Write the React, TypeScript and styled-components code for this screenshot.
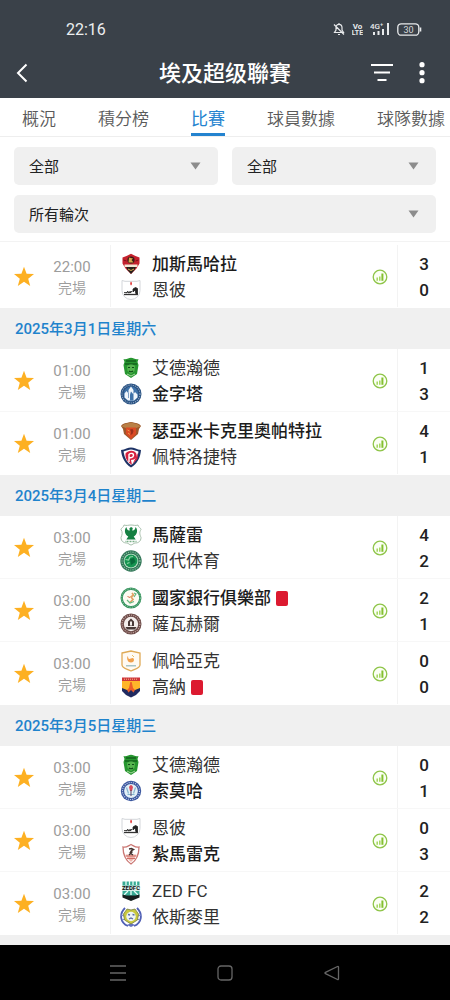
import React from 'react';
import styled, { createGlobalStyle } from 'styled-components';

const GlobalStyle = createGlobalStyle`
  *, *::before, *::after { box-sizing: border-box; }
  body {
    margin: 0;
    background: #fff;
    color: #222;
    font-family: Roboto, "Noto Sans CJK SC", sans-serif;
  }
  button, select { font: inherit; color: inherit; }
  button { border: 0; padding: 0; background: none; cursor: pointer; }
  svg { display: block; }
  h1, h2, ul { margin: 0; padding: 0; font: inherit; list-style: none; }
`;

const Screen = styled.div`
  display: flex;
  flex-direction: column;
  min-height: 100vh;
`;

const Header = styled.header`
  background: #3a4149;
  color: #fff;
`;

const StatusBar = styled.div`
  display: flex;
  align-items: center;
  justify-content: space-between;
  height: 48px;
  padding: 10px 28px 0 66px;
  font-size: 16px;
  color: #eceef0;
`;

const StatusIcons = styled.div`
  display: flex;
  align-items: center;
  gap: 7px;
`;

const TitleBar = styled.div`
  display: grid;
  grid-template-columns: 80px 1fr 80px;
  align-items: center;
  height: 50px;
`;

const Title = styled.h1`
  padding-top: 2px;
  font-size: 22px;
  font-weight: 500;
  line-height: 30px;
  text-align: center;
`;

const BackButton = styled.button`
  justify-self: start;
  padding: 4px 16px;
`;

const HeaderActions = styled.div`
  display: flex;
  align-items: center;
  justify-content: flex-end;
  gap: 26px;
  padding-right: 25px;
`;

const Tabs = styled.nav`
  display: flex;
  gap: 42px;
  height: 39px;
  padding: 0 5px 0 22px;
  overflow-x: auto;
  overflow-y: hidden;
  scrollbar-width: none;
  border-bottom: 1px solid #eee;
`;

const Tab = styled.a<{ $active?: boolean }>`
  flex: none;
  height: 38px;
  font-size: 17px;
  font-weight: ${(p) => (p.$active ? 400 : 350)};
  line-height: 42px;
  text-decoration: none;
  white-space: nowrap;
  color: ${(p) => (p.$active ? '#2483cf' : '#5a5a5a')};
  border-bottom: ${(p) => (p.$active ? '3px solid #2483cf' : '0')};
`;

const Filters = styled.form`
  display: grid;
  grid-template-columns: 1fr 1fr;
  gap: 10px 14px;
  padding: 10px 14px 8px;
  border-bottom: 1px solid #f3f3f3;
`;

const Field = styled.label<{ $wide?: boolean }>`
  display: grid;
  align-items: center;
  grid-column: ${(p) => (p.$wide ? '1 / -1' : 'auto')};
  border-radius: 5px;
  background: #f0f0f0;

  & > * { grid-area: 1 / 1; }
  & > svg {
    justify-self: end;
    margin-right: 17px;
    pointer-events: none;
  }
`;

const Select = styled.select`
  appearance: none;
  width: 100%;
  height: 38px;
  padding: 2px 36px 0 15px;
  border: 0;
  background: transparent;
  font-size: 15px;
  color: #222;
`;

const Main = styled.main`
  display: flex;
  flex-direction: column;
  flex: 1;
  padding-top: 3px;
`;

const DateHeading = styled.h2`
  height: 41px;
  padding-left: 15px;
  background: #f0f0f0;
  color: #1f83cc;
  font-size: 15px;
  font-weight: 500;
  line-height: 43px;
`;

const Row = styled.li`
  display: flex;
  height: 63px;
  border-bottom: 1px solid #f7f7f7;

  &:last-child { border-bottom-color: #fff; }
`;

const StarButton = styled.button`
  display: flex;
  align-items: center;
  justify-content: center;
  width: 48px;
  padding-top: 2px;
`;

const Kickoff = styled.div`
  display: flex;
  flex-direction: column;
  align-items: center;
  width: 63px;
  padding: 12px 14px 0 0;
  border-right: 1px solid #f3f3f3;
  color: #9c9c9c;
  font-size: 15px;
  font-weight: 400;
  line-height: 21px;
`;

const State = styled.span`
  font-size: 14px;
  font-weight: 350;
`;

const Teams = styled.div`
  flex: 1;
  min-width: 0;
  padding: 6px 0 0 9px;
`;

const Team = styled.div<{ $winner?: boolean }>`
  display: flex;
  align-items: center;
  height: 26px;
  font-size: 17px;
  font-weight: ${(p) => (p.$winner ? 500 : 400)};
  line-height: 26px;
  color: ${(p) => (p.$winner ? '#1c1c1c' : '#333')};
  white-space: nowrap;

  & > svg { flex: none; margin-right: 10px; }
`;

const TeamName = styled.span`
  height: 26px;
`;

const RedCard = styled.span`
  width: 12px;
  height: 15px;
  margin-left: 5px;
  border-radius: 2px;
  background: #dc1a30;
`;

const StatsButton = styled.button`
  display: flex;
  align-items: center;
  justify-content: center;
  width: 34px;
  padding-top: 2px;
`;

const Scores = styled.div`
  width: 53px;
  padding-top: 6px;
  border-left: 1px solid #f3f3f3;
  font-size: 17px;
  font-weight: 500;
  line-height: 26px;
  text-align: center;
`;

const Score = styled.div``;

const Filler = styled.div`
  flex: 1;
  min-height: 10px;
  background: #f0f0f0;
`;

const SystemNav = styled.nav`
  display: grid;
  grid-template-columns: repeat(3, 1fr);
  height: 55px;
  padding: 0 64px;
  background: #000;
`;

const SystemButton = styled.button`
  display: flex;
  align-items: center;
  justify-content: center;
`;

const Caret = () => (
  <svg width="11" height="8" viewBox="0 0 11 8" aria-hidden="true">
    <path d="M0.500 0.500h10L5.500 7.500z" fill="#8c8c8c" />
  </svg>
);

const Star = () => (
  <svg width="22" height="22" viewBox="0 0 22 22" aria-hidden="true">
    <path d="M11 .8l2.600 7 7.400.3-5.800 4.600 2 7.200L11 15.800l-6.200 4.100 2-7.200L1 8.100l7.400-.3z" fill="#fdb022" />
  </svg>
);

const StatsIcon = () => (
  <svg width="16" height="16" viewBox="0 0 16 16" aria-hidden="true">
    <circle cx="8" cy="8" r="6.800" fill="#fbfff5" stroke="#8fc549" strokeWidth="1.300" />
    <path d="M5.200 8.500v3.300M7.800 7.500v4.300" stroke="#a3d65c" strokeWidth="1.500" />
    <path d="M10.400 4.500v7.300" stroke="#84c02f" strokeWidth="2" />
  </svg>
);

const crests: Record<string, React.ReactNode> = {
  mahalla: (
    <>
      <path d="M2.500 4.500l4-1.500L11 .8 15.500 3l4 1.500v6l-3 5L11 21l-5.500-5.500-3-5z" fill="#c4212d" />
      <path d="M5.500 12.500h11L14.500 17 11 21l-3.500-4z" fill="#26201b" />
      <path d="M4.500 11.500h13v2.500h-13z" fill="#f2e8d5" />
      <path d="M8 16l3 1.500 3-1.500" fill="none" stroke="#d7aa52" />
      <circle cx="11" cy="7" r="3.600" fill="#3a1b16" />
      <path d="M9 4.500l4 1-1.500 1.500 2 2.500h-5z" fill="#d8a64c" />
      <path d="M3.500 7l3 1M18.500 7l-3 1" stroke="#7b1119" />
    </>
  ),
  enppi: (
    <>
      <path d="M2 1.500l3 .8h12l3-.8v10a9 9 0 0 1-18 0z" fill="#fff" stroke="#d3d6da" />
      <path d="M11 2.500c1.500 1.500 1.200 3 0 4-1-1-1.200-2.500 0-4z" fill="#e13c3c" />
      <path d="M4 13.500l3 .3.500-1.500.5 1.500 3-.3 1-1.500M13 10l2.500-1.500 2 1v5.500h-1.500l-1-4-2 2z" fill="#222" stroke="#222" strokeWidth=".8" />
      <path d="M4 15.500h14" stroke="#333" strokeWidth="1.300" />
    </>
  ),
  ittihad: (
    <>
      <path d="M3.500 2c3 1 5-1.200 7.500-1.200S15.500 3 18.500 2l-1 3 1 3L17 17l-6 4-6-4L3.500 8l1-3z" fill="#26962f" />
      <path d="M5 7h12M6 4h10" stroke="#13611d" strokeWidth="1.300" />
      <path d="M7 9c2-2 6-2 8 0l-.5 5-3.500 3-3.500-3z" fill="#55b44f" />
      <path d="M8 10.500h2M12 10.500h2M9 14q2 1.500 4 0" stroke="#0d4c18" strokeWidth="1.200" fill="none" />
      <path d="M7 17l4 2 4-2" stroke="#a5d79b" fill="none" />
    </>
  ),
  pyramids: (
    <>
      <circle cx="11" cy="11" r="10.500" fill="#2b5383" />
      <circle cx="11" cy="11" r="9" fill="none" stroke="#9cb2cc" strokeWidth="1.100" strokeDasharray="1 1.200" />
      <circle cx="11" cy="11" r="7.400" fill="#3f72a8" />
      <path d="M4.500 14.500V10.500L6.500 8l2 2.500V7L11 3.500 13.500 7v4L15 9l2.500 2.500v3L14 17.500H8z" fill="#f1f6fb" />
      <path d="M11 8.500l2.500 3v6h-3.500v-6z" fill="#3f72a8" />
      <path d="M8.500 10v5" stroke="#7f9fc4" />
    </>
  ),
  ceramica: (
    <>
      <path d="M1 6c2-3 5-3 10-4 5 1 8 1 10 4l-2 3-1 5-7 6-7-6-1-5z" fill="#9d572b" />
      <path d="M1.500 6.500C4 3.500 7 3.500 11 2.500c4 1 7 1 9.500 4L16 8H6z" fill="#b98046" />
      <path d="M6 7.500h10v6.500l-5 5-5-5z" fill="#db4a24" />
      <path d="M10 9.500l2.500-.5 1 2-1 3-2 1 .5-3z" fill="#9c2f1c" />
      <path d="M7.500 10l2 1M8 13l2 1.500" stroke="#f19a4a" />
    </>
  ),
  petrojet: (
    <>
      <path d="M1 4c4-.5 7-2.500 10-2.500S17 3.500 21 4c-.5 7-3.500 14-10 17.500C5 18 1.500 11 1 4z" fill="#1e3366" />
      <path d="M3.500 5.500c3-1 5.500-2 7.500-2s4.500 1 7.500 2c-1 6-3 11-7.500 13.500C7 16.500 4.500 12 3.500 5.500z" fill="#fff" />
      <path d="M5.500 7.500c3-3.500 8-3.500 10.500-.5 2 4-1 7-5 7l1 5-2.500-2C6.500 14.500 5 11 5.500 7.500z" fill="#d5213f" />
      <path d="M9 16V8.500c2-2 5-1 4.500 1S11 12 9.500 11.500" fill="none" stroke="#fff" strokeWidth="1.400" />
      <path d="M18 7l-5.500 11 5-5z" fill="#d5213f" />
    </>
  ),
  masry: (
    <>
      <path d="M4 1c3 1 4 0 7 0s4 1 7 0c0 2 3 3 3 4.500-2 3-1 5.500 0 8 0 4-3 5.500-5.500 5.500-2 0-3 2-4.500 2s-2.500-2-4.500-2C4 19 1 17.500 1 13.500c1-2.500 2-5 0-8C1 4 4 3 4 1z" fill="#fff" stroke="#9db8a3" strokeWidth=".9" />
      <path d="M11 3l1.800 1-.6 2.500c2 .5 3-1.500 3.500-3.500 2.500 3.500 1.500 7.500-2 9.500l2 3H6.300l2-3c-3.500-2-4.500-6-2-9.500.5 2 1.500 4 3.500 3.500l-.5-2z" fill="#158042" />
      <path d="M5.500 17.500h11" stroke="#79af87" strokeWidth="1.300" strokeDasharray="1 .5" />
    </>
  ),
  modern: (
    <>
      <circle cx="11" cy="11" r="10.700" fill="#35785a" />
      <circle cx="11" cy="11" r="9" fill="none" stroke="#8ec7a5" strokeWidth="1.100" strokeDasharray="1 1.300" />
      <circle cx="11" cy="11" r="7.300" fill="#c8e8d0" />
      <circle cx="11" cy="11" r="6.500" fill="#169451" />
      <path d="M5.500 9.500l3 .5 1.500-3 3-.5M7 13.500l2.500-1" fill="none" stroke="#8ad6a3" strokeWidth="1.200" />
      <path d="M10 9l4-1 1.500 4-4.500 3z" fill="#096b3b" />
    </>
  ),
  bank: (
    <>
      <circle cx="11" cy="11" r="9.300" fill="#fff" stroke="#3b9661" strokeWidth="2.400" />
      <circle cx="11" cy="11" r="9.300" fill="none" stroke="#a8d3b9" strokeWidth=".8" strokeDasharray="1 1.500" />
      <circle cx="11" cy="11" r="7.200" fill="#fdfaf0" />
      <path d="M12 6l1.500 2-2.500 2 2 2.500-3 3" fill="none" stroke="#e0a063" strokeWidth="1.700" />
      <path d="M14 6l2 1-2 3M7 13l3 3 4-1.500" fill="none" stroke="#63b77e" strokeWidth="1.100" />
      <path d="M7.500 9.500l2.500 1" stroke="#d96a4c" />
    </>
  ),
  sawahel: (
    <>
      <circle cx="11" cy="11" r="10.500" fill="#6d4c49" />
      <circle cx="11" cy="11" r="8.900" fill="none" stroke="#c8aaa6" strokeWidth="1.200" strokeDasharray="1 1.200" />
      <circle cx="11" cy="11" r="7.200" fill="#f4eeec" />
      <path d="M5.500 14h11l-1.500 2.500H7zM8 13V8.500L11 5.500l3 3V13z" fill="#4a3a38" />
      <path d="M10 8.500h2v4h-2z" fill="#f4eeec" />
    </>
  ),
  pharco: (
    <>
      <path d="M2 3l9-2 9 2v12c0 3-5 4-9 6-4-2-9-3-9-6z" fill="#fffaf2" stroke="#dfaa56" strokeWidth="1.300" />
      <path d="M8 6c0 3 1 3.500 3 2.500 2-1.500 4 .5 2.500 3-1.500 1.500-5 1.500-6-1.500C7 8.500 7 7 8 6z" fill="#f2a04b" />
      <path d="M12 5l2 2" stroke="#e8c267" />
      <path d="M6 15h10v1.500H6z" fill="#a9c5c6" />
    </>
  ),
  gouna: (
    <>
      <path d="M2 2h18v12l-4 4-5 3-5-3-4-4z" fill="#ffb52a" />
      <path d="M2 1.500h18v3.500H2z" fill="#cf3539" />
      <path d="M4 3.200h14" stroke="#f6bd8a" strokeDasharray="1 1" />
      <path d="M10.300 6h1.400l1.300 6 3 3-5 3-5-3 3-3z" fill="#ec5c2a" />
      <path d="M2 12l5 2 1.500 2.500L11 14l2.500 2.500L15 14l5-2v3l-4 4-5 2.500L6 19l-4-4z" fill="#202a60" />
    </>
  ),
  smouha: (
    <>
      <circle cx="11" cy="11" r="10.200" fill="#3c589f" />
      <circle cx="11" cy="11" r="8.500" fill="none" stroke="#c7d1eb" strokeWidth="1.100" strokeDasharray="1 1.200" />
      <circle cx="11" cy="11" r="6.900" fill="#e3f0f7" />
      <path d="M6.500 7.500l2 6M15.500 7.500l-2 6M7.500 14.500h7" stroke="#86b5cf" strokeWidth="1.200" />
      <path d="M9 7q2-4 4 0l-1 4h-2z" fill="#dc4c5c" />
      <path d="M10.500 10h1v6h-1z" fill="#5b4160" />
    </>
  ),
  zamalek: (
    <>
      <path d="M3 4c3 1 5-1 8-2.500C14 3 16 5 19 4c0 7-2 13-8 17C5 17 3 11 3 4z" fill="#fff" stroke="#cb7773" strokeWidth="1.300" />
      <path d="M5.500 11.500h11L14 16l-3 3-3-3z" fill="#efb5ad" />
      <path d="M5.500 13h11M7 15.500h8" stroke="#cf6c64" />
      <path d="M9 6l2.500-.5 2 1-2 1L10 10l3 2M12.500 8.500L9 12" fill="none" stroke="#43322f" strokeWidth="1.400" />
    </>
  ),
  zed: (
    <>
      <path d="M2.500 1.500h17v14l-8.500 5-8.500-5z" fill="#38aa94" />
      <path d="M6 1v4M9.500 1v4M13 1v4M16.500 1v4M4 15l4-4M11 15v-4M18 15l-4-4" stroke="#e9fff8" strokeWidth="1.300" />
      <path d="M2.500 14.500l4 1h9l4-1v3L11 21l-8.500-3.500z" fill="#171e1e" />
      <path d="M2 5.500h18v5.500H2z" fill="#d9efe8" />
      <text x="11" y="10.400" textAnchor="middle" fontFamily="Roboto, sans-serif" fontSize="6" fontWeight="700" fill="#111">ZEDFC</text>
    </>
  ),
  ismaily: (
    <>
      <path d="M5 2C-1 8 0 17 8 20M17 2c6 6 5 15-3 18" fill="none" stroke="#5060b5" strokeWidth="1.800" />
      <path d="M1 9l3 1M2 14l3-1M21 9l-3 1M20 14l-3-1" stroke="#7f8bd0" strokeWidth="1.200" />
      <path d="M7 19l4-2 4 2-4 2z" fill="#6573bf" />
      <path d="M7 3l4 1 4-1 3.500 5-1 6-6.500 4-6.500-4-1-6z" fill="#c9c83e" stroke="#777f42" strokeWidth=".8" />
      <circle cx="11" cy="10.500" r="4.700" fill="#eef4f5" />
      <path d="M8 8.500l2 .5M12.500 8.500l2 .5M9 13l2-1 2 1" fill="none" stroke="#5a6ca4" strokeWidth="1.300" />
    </>
  ),
};

const Crest = ({ id }: { id: string }) => (
  <svg width="22" height="22" viewBox="0 0 22 22" aria-hidden="true">{crests[id]}</svg>
);

type Side = { crest: string; name: string; score: number; red?: boolean };
type Match = { time: string; sides: [Side, Side] };
type Day = { date?: string; matches: Match[] };

const side = (crest: string, name: string, score: number, red = false): Side => ({ crest, name, score, red });

const days: Day[] = [
  { matches: [{ time: '22:00', sides: [side('mahalla', '加斯馬哈拉', 3), side('enppi', '恩彼', 0)] }] },
  {
    date: '2025年3月1日星期六',
    matches: [
      { time: '01:00', sides: [side('ittihad', '艾德瀚德', 1), side('pyramids', '金字塔', 3)] },
      { time: '01:00', sides: [side('ceramica', '瑟亞米卡克里奧帕特拉', 4), side('petrojet', '佩特洛捷特', 1)] },
    ],
  },
  {
    date: '2025年3月4日星期二',
    matches: [
      { time: '03:00', sides: [side('masry', '馬薩雷', 4), side('modern', '现代体育', 2)] },
      { time: '03:00', sides: [side('bank', '國家銀行俱樂部', 2, true), side('sawahel', '薩瓦赫爾', 1)] },
      { time: '03:00', sides: [side('pharco', '佩哈亞克', 0), side('gouna', '高納', 0, true)] },
    ],
  },
  {
    date: '2025年3月5日星期三',
    matches: [
      { time: '03:00', sides: [side('ittihad', '艾德瀚德', 0), side('smouha', '索莫哈', 1)] },
      { time: '03:00', sides: [side('enppi', '恩彼', 0), side('zamalek', '紮馬雷克', 3)] },
      { time: '03:00', sides: [side('zed', 'ZED FC', 2), side('ismaily', '依斯麥里', 2)] },
    ],
  },
];

const tabs = ['概況', '積分榜', '比賽', '球員數據', '球隊數據'];

const MatchRow = ({ match }: { match: Match }) => {
  const best = Math.max(match.sides[0].score, match.sides[1].score);
  const draw = match.sides[0].score === match.sides[1].score;
  return (
    <Row>
      <StarButton type="button" aria-label="收藏" aria-pressed="true"><Star /></StarButton>
      <Kickoff>
        <time>{match.time}</time>
        <State>完場</State>
      </Kickoff>
      <Teams>
        {match.sides.map((s) => (
          <Team key={s.name} $winner={!draw && s.score === best}>
            <Crest id={s.crest} />
            <TeamName>{s.name}</TeamName>
            {s.red && <RedCard role="img" aria-label="紅牌" />}
          </Team>
        ))}
      </Teams>
      <StatsButton type="button" aria-label="統計"><StatsIcon /></StatsButton>
      <Scores>
        {match.sides.map((s) => <Score key={s.name}>{s.score}</Score>)}
      </Scores>
    </Row>
  );
};

const StatusGlyphs = () => (
  <StatusIcons>
    <svg width="12" height="14" viewBox="0 0 12 14" fill="none" stroke="#e8eaec" strokeWidth="1.200">
      <path d="M3 5.500C3 3.500 4.300 2.300 6 2.300s3 1.200 3 3.200v2.500l1.500 2.500h-9L3 8zM5 12.500h2M6 1v1M1 2.500l10 10" />
    </svg>
    <svg width="11" height="14" viewBox="0 0 11 14" fill="#e8eaec" fontFamily="Roboto, sans-serif" fontWeight="700" fontSize="8" textAnchor="middle">
      <text x="5.500" y="6.500">Vo</text>
      <text x="5.500" y="13" fontSize="7">LTE</text>
    </svg>
    <svg width="20" height="14" viewBox="0 0 20 14" fill="#e8eaec">
      <text x="0" y="6.500" fontFamily="Roboto, sans-serif" fontWeight="500" fontSize="8">4G⁺</text>
      <path d="M3 10h2v3H3zM7.500 9h2v4h-2zM12 7h2v6h-2zM17 1h2v12h-2z" />
    </svg>
    <svg width="25" height="13" viewBox="0 0 25 13">
      <rect x=".8" y=".8" width="21" height="11.400" rx="3.500" fill="none" stroke="#e8eaec" strokeWidth="1.300" />
      <path d="M23.500 4.500v4" stroke="#e8eaec" strokeWidth="1.600" />
      <text x="11.500" y="9.700" textAnchor="middle" fontFamily="Roboto, sans-serif" fontSize="9" fill="#d5d8da">30</text>
    </svg>
  </StatusIcons>
);

export default function App() {
  return (
    <Screen>
      <GlobalStyle />
      <Header>
        <StatusBar>
          <time>22:16</time>
          <StatusGlyphs />
        </StatusBar>
        <TitleBar>
          <BackButton type="button" aria-label="返回">
            <svg width="12" height="20" viewBox="0 0 12 20" fill="none" stroke="#fff" strokeWidth="2">
              <path d="M10.500 1.500L2 10l8.500 8.500" />
            </svg>
          </BackButton>
          <Title>埃及超级聯賽</Title>
          <HeaderActions>
            <button type="button" aria-label="篩選">
              <svg width="22" height="20" viewBox="0 0 22 20" stroke="#fff" strokeWidth="2">
                <path d="M0 2h22M3 9.500h16M6.500 17h9" />
              </svg>
            </button>
            <button type="button" aria-label="更多">
              <svg width="6" height="22" viewBox="0 0 6 22" fill="#fff">
                <circle cx="3" cy="2.700" r="2.600" />
                <circle cx="3" cy="10.700" r="2.600" />
                <circle cx="3" cy="18.700" r="2.600" />
              </svg>
            </button>
          </HeaderActions>
        </TitleBar>
      </Header>
      <Tabs>
        {tabs.map((t) => (
          <Tab key={t} href="#" $active={t === '比賽'} aria-current={t === '比賽' ? 'page' : undefined}>{t}</Tab>
        ))}
      </Tabs>
      <Filters>
        <Field>
          <Select aria-label="階段"><option>全部</option></Select>
          <Caret />
        </Field>
        <Field>
          <Select aria-label="球隊"><option>全部</option></Select>
          <Caret />
        </Field>
        <Field $wide>
          <Select aria-label="輪次"><option>所有輪次</option></Select>
          <Caret />
        </Field>
      </Filters>
      <Main>
        {days.map((day, i) => (
          <section key={i}>
            {day.date && <DateHeading>{day.date}</DateHeading>}
            <ul>
              {day.matches.map((m, j) => <MatchRow key={j} match={m} />)}
            </ul>
          </section>
        ))}
        <Filler />
      </Main>
      <SystemNav aria-label="系統導覽">
        <SystemButton type="button" aria-label="最近">
          <svg width="16" height="16" viewBox="0 0 16 16" stroke="#666" strokeWidth="1.300">
            <path d="M0 1h16M0 8h16M0 15h16" />
          </svg>
        </SystemButton>
        <SystemButton type="button" aria-label="主頁">
          <svg width="16" height="16" viewBox="0 0 16 16" fill="none" stroke="#666" strokeWidth="1.300">
            <rect x="1" y="1" width="14" height="14" rx="3" />
          </svg>
        </SystemButton>
        <SystemButton type="button" aria-label="上一頁">
          <svg width="16" height="16" viewBox="0 0 16 16" fill="none" stroke="#666" strokeWidth="1.300">
            <path d="M13.500 1.500q1-.5 1 .7v11.600q0 1.200-1 .7L1.500 8.700q-1-.7 0-1.400z" />
          </svg>
        </SystemButton>
      </SystemNav>
    </Screen>
  );
}
